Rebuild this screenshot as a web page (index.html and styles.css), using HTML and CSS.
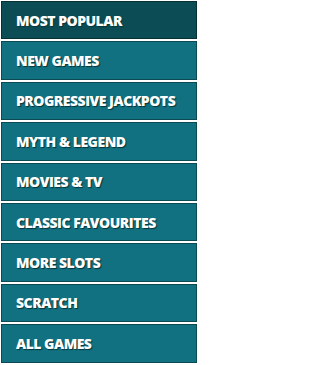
FILE: index.html
```html
<!DOCTYPE html>
<html>
<head>
<meta charset="utf-8">
<link rel="stylesheet" href="styles.css">
</head>
<body>
<nav class="menu">
  <a class="item active">MOST POPULAR</a>
  <a class="item">NEW GAMES</a>
  <a class="item">PROGRESSIVE JACKPOTS</a>
  <a class="item">MYTH &amp; LEGEND</a>
  <a class="item">MOVIES &amp; TV</a>
  <a class="item">CLASSIC FAVOURITES</a>
  <a class="item">MORE SLOTS</a>
  <a class="item">SCRATCH</a>
  <a class="item">ALL GAMES</a>
</nav>
</body>
</html>
```
FILE: styles.css
```css
html, body {
  margin: 0;
  padding: 0;
  background: #ffffff;
}
.menu {
  display: flex;
  flex-direction: column;
  gap: 2px;
  padding: 1px 3px 0 1px;
  width: 196px;
}
.item {
  display: flex;
  align-items: center;
  box-sizing: border-box;
  height: 38.4px;
  padding-left: 14px;
  background: #117180;
  border: 1px solid #0b4a52;
  color: #ffffff;
  font-family: "Open Sans", "Liberation Sans", sans-serif;
  font-weight: 800;
  font-size: 14px;
  letter-spacing: -0.5px;
  text-shadow: 1px 1px 1px #06343a;
  white-space: nowrap;
}
.item.active {
  background: #0c4c55;
  border-color: #082f35;
}
```
